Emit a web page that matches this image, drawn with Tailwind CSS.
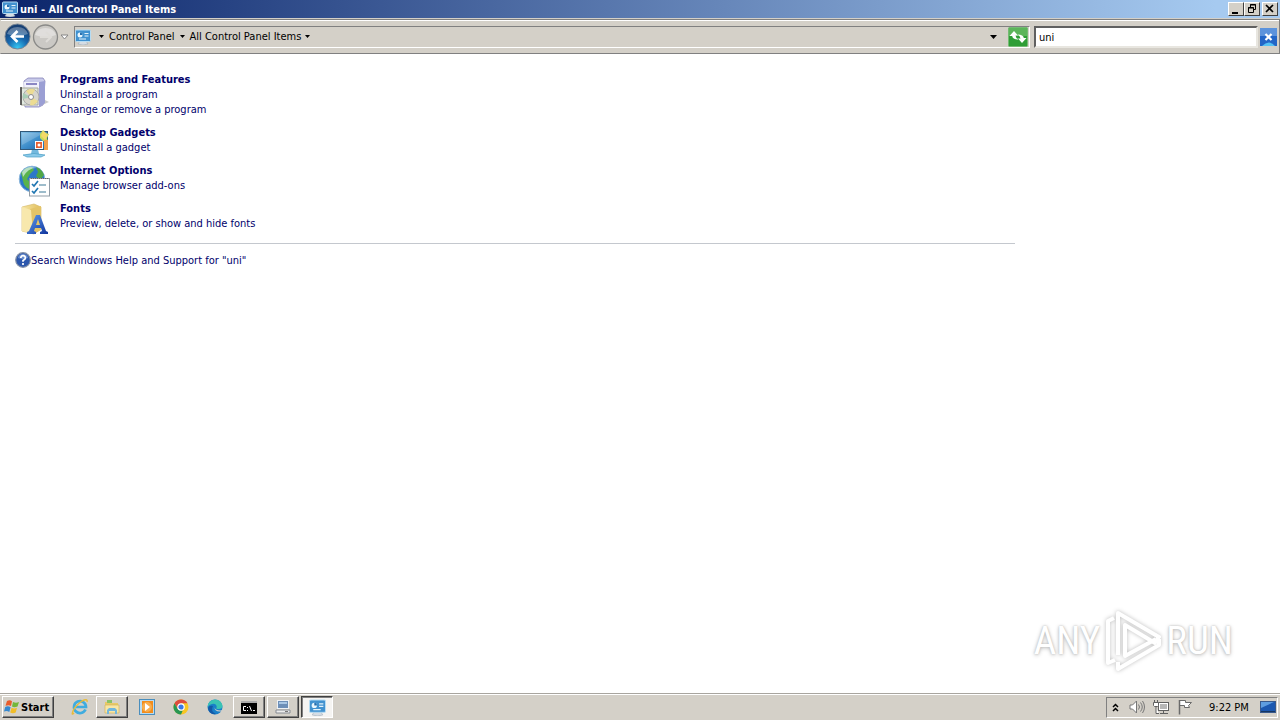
<!DOCTYPE html>
<html lang="en">
<head>
<meta charset="utf-8">
<title>uni - All Control Panel Items</title>
<script src="https://cdn.jsdelivr.net/npm/@tailwindcss/browser@4"></script>
</head>
<body class="flex h-screen flex-col overflow-hidden bg-white font-['DejaVu_Sans_Condensed','DejaVu_Sans',sans-serif] text-[11px] leading-[15px] text-black">
<svg class="absolute size-0" aria-hidden="true">
  <defs>
    <linearGradient id="blue" x1="0" y1="0" x2="1" y2="1"><stop stop-color="#8ac4e8"/><stop offset=".5" stop-color="#3f8fcb"/><stop offset="1" stop-color="#1b62a8"/></linearGradient>
    <linearGradient id="folder" x1="0" y1="0" x2="1" y2="0"><stop stop-color="#f8e7a5"/><stop offset="1" stop-color="#dfbd5c"/></linearGradient>
    <radialGradient id="orb" cx=".5" cy=".95" r=".8"><stop stop-color="#36c8f4"/><stop offset=".5" stop-color="#1769b0"/><stop offset="1" stop-color="#174074"/></radialGradient>
    <linearGradient id="letter" x1="0" y1="0" x2="1" y2="1"><stop stop-color="#5e9df0"/><stop offset="1" stop-color="#10349c"/></linearGradient>
    <symbol id="panel" viewBox="0 0 16 16">
      <path d="M5 12h6l2 3q-5 2-10 0z" fill="#d6dde4" stroke="#9aa8b5" stroke-width=".5"/>
      <rect x=".5" y="1" width="15" height="11.500" rx="1" fill="#3b8fd0" stroke="#b7dcf2"/>
      <rect x="1.500" y="2" width="13" height="9.500" fill="#4292cf"/>
      <circle cx="5" cy="6" r="2.500" fill="#e9f6fd"/><path d="M5 6V3.500A2.500 2.500 0 0 1 7.500 6z" fill="#246dad"/>
      <path d="M9.500 4.500h4M9.500 7h4M4 10h7" stroke="#e3f2fb" stroke-width="1.200"/>
    </symbol>
  </defs>
</svg>

<header class="shrink-0">
  <div class="flex h-[18px] items-center justify-between bg-linear-to-r/srgb from-[#0a246a] to-[#a6caf0] to-95% pr-[2px] pl-[2px]">
    <h1 class="flex items-center gap-[2px] font-bold whitespace-nowrap text-white"><svg class="size-4"><use href="#panel"/></svg>uni - All Control Panel Items</h1>
    <div class="flex">
      <button aria-label="Minimize" class="h-[14px] w-4 border border-t-white border-r-[#404040] border-b-[#404040] border-l-white bg-[#d4d0c8]"><svg viewBox="0 0 14 12" class="h-3 w-[14px]"><path d="M3 9h6v2H3z"/></svg></button>
      <button aria-label="Restore" class="h-[14px] w-4 border border-t-white border-r-[#404040] border-b-[#404040] border-l-white bg-[#d4d0c8]"><svg viewBox="0 0 14 12" class="h-3 w-[14px]" fill="none" stroke="#000"><path d="M5.500 4V1.500h5v5H9M5 2h6M3.500 4.500h5v5h-5zM3 5h6"/></svg></button>
      <button aria-label="Close" class="ml-[2px] h-[14px] w-4 border border-t-white border-r-[#404040] border-b-[#404040] border-l-white bg-[#d4d0c8]"><svg viewBox="0 0 14 12" class="h-3 w-[14px]"><path d="M3 2l7 7M10 2l-7 7" stroke="#000" stroke-width="1.700"/></svg></button>
    </div>
  </div>
  <div class="mt-px flex h-[35px] items-center border border-t-[#808080] border-r-[#808080] border-b-[#808080] border-l-[#d4d0c8] bg-[#d4d0c8] pr-[2px] pl-[3px] shadow-[0_-1px_0_#d4d0c8,inset_0_1px_0_#fff]">
    <nav class="flex shrink-0 items-center" aria-label="History">
      <button aria-label="Back"><svg class="size-[27px]" viewBox="0 0 27 27"><circle cx="13.500" cy="13.500" r="12.500" fill="url(#orb)" stroke="#788594"/><path d="M3 11a11 10 0 0 1 21 0q-10 4-21 0z" fill="#fff" opacity=".3"/><path d="M13.500 8l-5.500 5.500 5.500 5.500M8.500 13.500H20" fill="none" stroke="#fff" stroke-width="2.700"/></svg></button>
      <button aria-label="Forward"><svg class="size-[28px]" viewBox="0 0 28 28"><circle cx="14.500" cy="14" r="12" fill="#cbc9c5" stroke="#8a8a88" stroke-width="1.300"/><path d="M4 12a11 10 0 0 1 21 0q-10 4-21 0z" fill="#fff" opacity=".4"/><path d="M15 9l5 5-5 5M9 14h10" fill="none" stroke="#dedcd8" stroke-width="2"/></svg></button>
      <button aria-label="Recent pages" class="ml-px"><svg class="h-[6px] w-[9px]" viewBox="0 0 9 6"><path d="M1 1h7L4.500 5z" fill="#fff" stroke="#858585"/></svg></button>
    </nav>
    <div class="ml-[5px] flex h-[22px] min-w-0 flex-1 items-center border border-t-[#808080] border-r-white border-b-white border-l-[#808080]">
      <svg class="size-4 shrink-0"><use href="#panel"/></svg>
      <ol class="ml-2 flex items-center whitespace-nowrap">
        <li class="flex items-center"><svg class="mr-[5px] h-[3px] w-[5px]" viewBox="0 0 5 3"><path d="M0 0h5L2.500 3z"/></svg><a href="#">Control Panel</a></li>
        <li class="flex items-center"><svg class="mx-[5px] h-[3px] w-[5px]" viewBox="0 0 5 3"><path d="M0 0h5L2.500 3z"/></svg><a href="#">All Control Panel Items</a></li>
        <li class="flex"><button aria-label="Show items" class="ml-[4px]"><svg class="h-[3px] w-[5px]" viewBox="0 0 5 3"><path d="M0 0h5L2.500 3z"/></svg></button></li>
      </ol>
      <button aria-label="Previous locations" class="mr-[11px] ml-auto"><svg class="h-1 w-[7px]" viewBox="0 0 7 4"><path d="M0 0h7L3.500 4z"/></svg></button>
      <button aria-label="Refresh" class="mr-px"><svg class="h-5 w-5" viewBox="0 0 20 20"><rect x=".5" y=".5" width="19" height="19" rx="1" fill="#2f9e36" stroke="#74bb73"/><path d="M1 1h18v8H1z" fill="#5cb55a"/><path d="M1.500 9L6 4l4 4.500H7.500q.3 2.500 3 4-6-.2-6.300-3.500z" fill="#fff"/><path d="M18.500 11L14 16l-4-4.500h2.500q-.3-2.500-3-4 6 .2 6.300 3.500z" fill="#fff"/></svg></button>
    </div>
    <form class="ml-1 flex items-center" role="search">
      <input aria-label="Search" type="text" value="uni" class="h-[22px] w-[224px] rounded-none border-2 border-t-[#606060] border-r-[#e8e6e0] border-b-[#e8e6e0] border-l-[#606060] bg-white px-[3px] pt-px outline-none">
      <button type="button" aria-label="Clear search" class="ml-[2px]"><svg class="h-[18px] w-[17px]" viewBox="0 0 17 18"><rect width="17" height="18" fill="#2366c7"/><path d="M0 0h17v8H0z" fill="#5c93dc"/><path d="M2 18q7-7 13 0z" fill="#54c2f4"/><path d="M5.500 6l6 6M11.500 6l-6 6" stroke="#fff" stroke-width="2.200"/></svg></button>
    </form>
  </div>
</header>

<main class="relative flex-1 pt-[18px] pl-[15px] text-[#00006b]">
  <ul class="flex flex-col gap-2">
    <li class="flex gap-[10px] pl-[3px]">
      <svg class="mt-1 size-8 shrink-0" viewBox="0 0 32 32"><path d="M22 30l9-4-6-3z" fill="#ccc"/><path d="M6 5l4-3h15l2 3-2 24-4 2H7z" fill="#c8caea" stroke="#8583b8" stroke-width=".8"/><path d="M6 6h15v24H7z" fill="#f1f1fb"/><path d="M21 6l6-1v22l-6 4z" fill="#9b9fd4"/><path d="M8 8h11" stroke="#8b87c4" stroke-width="2"/><path d="M3 12h17v17H3z" fill="#dbe5d8" fill-opacity=".8" stroke="#a5a598"/><path d="M3 11v18" stroke="#454545" stroke-width="1.600"/><circle cx="13" cy="21" r="8" fill="#d7d5cb" stroke="#aaa"/><path d="M13 21L8 15q5-4 9-1zM13 21l7 4q-3 5-8 4z" fill="#ecdc93"/><path d="M13 21l-8 2v-6z" fill="#a7cdb5"/><circle cx="13" cy="21" r="2.500" fill="#fff" stroke="#8b8b8b"/></svg>
      <div><h2 class="font-bold"><a href="#">Programs and Features</a></h2><p><a href="#">Uninstall a program</a></p><p><a href="#">Change or remove a program</a></p></div>
    </li>
    <li class="flex gap-[10px] pl-[3px]">
      <svg class="mt-[2px] -mb-1 size-8 shrink-0" viewBox="0 0 32 32"><path d="M14 22h6l1 5h-8z" fill="#73b8dd"/><path d="M5 28q11-3 22 0l-4 2H9z" fill="#8acaea" stroke="#4a9dc4" stroke-width=".7"/><rect x="2.500" y="4.500" width="27" height="18" fill="url(#blue)" stroke="#315878"/><path d="M4 6h22L4 18z" fill="#fff" opacity=".18"/><path d="M22 7l3-4 3 3 3 1-2 4 1 4-5-1-3-3z" fill="#c6dc5c"/><path d="M25 4l5 4-3 5-4-4z" fill="#f4da69"/><rect x="17.500" y="14.500" width="7" height="7" fill="#e96133" stroke="#fff"/><circle cx="21" cy="18" r="1.500" fill="#fff"/><path d="M26 13h4v10h-4z" fill="#f3a04c"/></svg>
      <div><h2 class="font-bold"><a href="#">Desktop Gadgets</a></h2><p><a href="#">Uninstall a gadget</a></p></div>
    </li>
    <li class="flex gap-[10px] pl-[3px]">
      <svg class="mt-[2px] -mb-1 size-8 shrink-0" viewBox="0 0 32 32"><circle cx="14" cy="14" r="12.800" fill="#2c78c8" stroke="#8cb7dc"/><path d="M3 8q4-6 11-6l2 3-4 4-3 5 3 3-1 7q-5-2-6-8z" fill="#59b34c"/><path d="M18 2q6 2 8 8l-4 5-4-4 2-4z" fill="#50a745"/><path d="M4 7q5-7 14-4-8 0-13 9z" fill="#e9f8ff" opacity=".65"/><rect x="11.500" y="13.500" width="20" height="17.500" fill="#fff" stroke="#929da7"/><path d="M13 13.500h17" stroke="#666" stroke-dasharray="1 1"/><path d="M14 19l2 2 4-5M14 26l2 2 4-5" fill="none" stroke="#2077b2" stroke-width="1.700"/><path d="M21 20h7M21 27h7" stroke="#7ea6bb" stroke-width="1.500"/></svg>
      <div><h2 class="font-bold"><a href="#">Internet Options</a></h2><p><a href="#">Manage browser add-ons</a></p></div>
    </li>
    <li class="flex gap-[10px] pl-[3px]">
      <svg class="mt-[2px] -mb-1 size-8 shrink-0" viewBox="0 0 32 32"><path d="M4 4l12-3 7 3v22l-7 5-12-3z" fill="url(#folder)" stroke="#d8bc6b" stroke-width=".7"/><path d="M12 6l11-3v24l-8 4z" fill="#e4c468"/><path d="M4 4l9 3 2 24-11-3z" fill="#f8e8ad"/><path d="M9 31v-2l2-1 7-16h4l6 16 2 1v2h-8v-2l2-1-1-3h-6l-1 3 2 1v2zM18 22h4l-2-6z" fill="url(#letter)" fill-rule="evenodd"/></svg>
      <div><h2 class="font-bold"><a href="#">Fonts</a></h2><p><a href="#">Preview, delete, or show and hide fonts</a></p></div>
    </li>
  </ul>
  <hr class="mt-3 w-[1000px] max-w-full border-t border-[#c4c8ce]">
  <a href="#" class="mt-2 flex items-center"><svg class="size-4" viewBox="0 0 16 16"><circle cx="8" cy="8" r="7.300" fill="#2d58ad" stroke="#8592a8" stroke-width="1.200"/><path d="M3 6a5 4 0 0 1 10 0q-5 2-10 0z" fill="#91b1e5" opacity=".6"/><path d="M5.800 6q0-2.300 2.300-2.300T10.400 6Q10.400 7.200 8 8.500v1.200M8 11v2" fill="none" stroke="#fff" stroke-width="1.700"/></svg>Search Windows Help and Support for "uni"</a>

  <div class="absolute right-[47px] bottom-[20px] flex h-16 items-center gap-1 font-['Roboto_Condensed',Roboto,sans-serif] text-[39px] leading-none text-white [text-shadow:0_0_2px_#bbb,0_1px_4px_#bbb]" aria-label="ANY RUN">
    <span>ANY</span>
    <svg class="h-16 w-[58px] drop-shadow-[0_0_2px_#bbb]" viewBox="0 0 58 64" fill="none" stroke="#fff" stroke-width="4" stroke-linejoin="round"><path d="M14 46V4l41 24-4 6-30-18v31l31-17"/><path d="M10 9l-6 3v42l7-3M14 53v7l41-24v-6"/></svg>
    <span>RUN</span>
  </div>
</main>

<footer class="flex h-[27px] shrink-0 items-center border-t border-[#a8a59f] bg-[#d4d0c8] p-[2px] shadow-[inset_0_1px_0_#fff]">
  <button class="flex h-[22px] w-[52px] items-center gap-px border border-t-white border-r-[#404040] border-b-[#404040] border-l-white pl-px font-bold shadow-[inset_-1px_-1px_0_#808080]"><svg class="size-4 shrink-0" viewBox="0 0 16 16"><path d="M3 2q3-1.500 5 .3L7 7Q5 5.500 1.500 6.800z" fill="#e85c2b"/><path d="M9 3q3 1.500 6 0l-1.500 4.500Q10 9 8 7.500z" fill="#73b739"/><path d="M1.200 8Q4 6.500 6.600 8.200L5.300 13Q3 11.500 0 12.500z" fill="#3588cf"/><path d="M7.600 8.700Q10 10 13 8.800L11.700 13.500Q9 15 6.200 13.500z" fill="#f1bd28"/></svg>Start</button>
  <nav class="ml-[9px] flex items-center" aria-label="Taskbar">
    <button aria-label="Internet Explorer" class="grid h-[22px] w-[33px] place-items-center"><svg class="size-[18px]" viewBox="0 0 18 18" fill="none"><path d="M14.500 11.500A6 6 0 1 1 15 9H5" stroke="#3facdf" stroke-width="2.700"/><path d="M3 15q-3 3-1-2Q4 8 11 3q6-3 5 1" stroke="#e8bb3a" stroke-width="1.400"/></svg></button>
    <button aria-label="File Explorer" class="grid h-[22px] w-8 place-items-center border border-t-white border-r-[#404040] border-b-[#404040] border-l-white shadow-[inset_-1px_-1px_0_#808080]"><svg class="size-4" viewBox="0 0 16 16"><path d="M1 3h5l1 1h7v10H1z" fill="#e9c967"/><path d="M3 1h5v3H3z" fill="#8ac267"/><path d="M1 6h14v8H1z" fill="#f8e6a5" stroke="#d5b65c" stroke-width=".7"/><path d="M3 15v-4l2-2h6l2 2v4h-2v-3H5v3z" fill="#73b7dc"/></svg></button>
    <button aria-label="Media Player" class="ml-[3px] grid h-[22px] w-8 place-items-center"><svg class="size-4" viewBox="0 0 16 16"><rect x=".5" y=".5" width="15" height="15" fill="#b9dbf0" stroke="#4a8ebd"/><rect x="3" y="2" width="11" height="12" fill="#f28c1b"/><circle cx="8" cy="8" r="5" fill="#f8ad4d"/><path d="M6 4l5 4-5 4z" fill="#fff"/></svg></button>
    <button aria-label="Chrome" class="ml-[2px] grid h-[22px] w-8 place-items-center"><svg class="size-4" viewBox="0 0 16 16"><circle cx="8" cy="8" r="7.500" fill="#f8c623"/><path d="M1.500 4.250A7.500 7.500 0 0 1 14.500 4.250H8L4.750 10z" fill="#dd4b3e"/><path d="M1.500 4.250L4.750 10q1.500 2 5 1.400L8 15.500A7.500 7.500 0 0 1 1.500 4.250z" fill="#279653"/><circle cx="8" cy="8" r="3.200" fill="#3978e6" stroke="#fff" stroke-width="1.200"/></svg></button>
    <button aria-label="Edge" class="ml-[2px] grid h-[22px] w-8 place-items-center"><svg class="size-4" viewBox="0 0 16 16"><circle cx="8" cy="8" r="7.500" fill="#197fc8"/><path d="M.6 8Q1 1 8 .5q6 0 7.500 6 0 4-5 3.500-2-.2-.7-2Q9 4 5 5 2 5.500.6 8z" fill="#3ac3b4"/><path d="M6 7q-3 5 3 8Q2 16 1 9q1-3 5-2z" fill="#1459a7"/><path d="M7.500 7.500q-.5 4 6.500 4l2-1v2l-3 0q-6 0-5.500-5z" fill="#d4d0c8"/></svg></button>
    <button aria-label="Command Prompt" class="ml-[2px] grid h-[22px] w-8 place-items-center border border-t-white border-r-[#404040] border-b-[#404040] border-l-white shadow-[inset_-1px_-1px_0_#808080]"><svg class="h-[13px] w-4" viewBox="0 0 16 13"><path d="M0 0h16v13H0z"/><path d="M0 1h16" stroke="#aaa" stroke-width="2"/><path d="M5 5.500H2.500v4H5M6.500 6v1M6.500 9v1M8.500 5l2 5M12 9.500h2" fill="none" stroke="#fff"/></svg></button>
    <button aria-label="System" class="ml-[2px] grid h-[22px] w-8 place-items-center border border-t-white border-r-[#404040] border-b-[#404040] border-l-white shadow-[inset_-1px_-1px_0_#808080]"><svg class="size-4" viewBox="0 0 16 16"><rect x="2.500" y="1.500" width="11" height="8" fill="#6d8fb8" stroke="#eef1f4"/><path d="M4 3h8v2H4z" fill="#a9c7e5"/><path d="M1 11h14v3H1z" fill="#eee" stroke="#868b93"/><path d="M10 12.500h3" stroke="#777"/></svg></button>
    <button aria-label="Control Panel" aria-pressed="true" class="ml-[2px] grid h-[22px] w-8 place-items-center border border-t-[#404040] border-r-white border-b-white border-l-[#404040] bg-[#f5f4f2] shadow-[inset_1px_1px_0_#808080]"><svg class="size-[17px]"><use href="#panel"/></svg></button>
  </nav>
  <div class="ml-auto flex h-[21px] w-[172px] items-center border border-t-[#808080] border-r-white border-b-white border-l-[#808080] pl-[5px]">
    <button aria-label="Show hidden icons"><svg class="h-[9px] w-[7px]" viewBox="0 0 7 9" fill="none" stroke="#000" stroke-width="1.500"><path d="M1 4l2.500-2.500L6 4M1 8l2.500-2.500L6 8"/></svg></button>
    <button aria-label="Volume" class="ml-[10px]"><svg class="size-4" viewBox="0 0 16 16" fill="none" stroke="#777"><path d="M1 6h2.500L7.500 2v12l-4-4H1z" fill="#fff"/><path d="M9.500 5.500q2 2.500 0 5M11.500 3.500q3.500 4.500 0 9M13.500 2q4 6 0 12"/></svg></button>
    <button aria-label="Network" class="ml-2"><svg class="size-4" viewBox="0 0 16 16" fill="#fff" stroke="#606060"><rect x="5.500" y="3.500" width="10" height="8"/><path d="M7 5h7v5H7z" fill="#b6b6b6" stroke="none"/><path d="M7 14.500h8M10.500 12v2M1.500 1v2M4.500 1v2M.5 3.500h5v3l-1 1h-3l-1-1zM3 8v6.500h3"/></svg></button>
    <button aria-label="Action Center" class="ml-2"><svg class="size-4" viewBox="0 0 16 16" fill="#fff" stroke="#6b6b6b"><path d="M2.500 15V1.500h6v2h6l-3 3 1 2h-5v-2h-5"/><path d="M2.500 1v14.500" stroke-width="1.500"/></svg></button>
    <time class="ml-4 whitespace-nowrap">9:22 PM</time>
    <button aria-label="Show desktop" class="mr-px ml-auto"><svg class="h-3 w-4" viewBox="0 0 16 12"><rect x=".5" y=".5" width="15" height="11" fill="#1c58b0" stroke="#38598c"/><path d="M1 1h13L1 7z" fill="#5e9de0"/><path d="M1 10.500h14" stroke="#163661"/></svg></button>
  </div>
</footer>
</body>
</html>
